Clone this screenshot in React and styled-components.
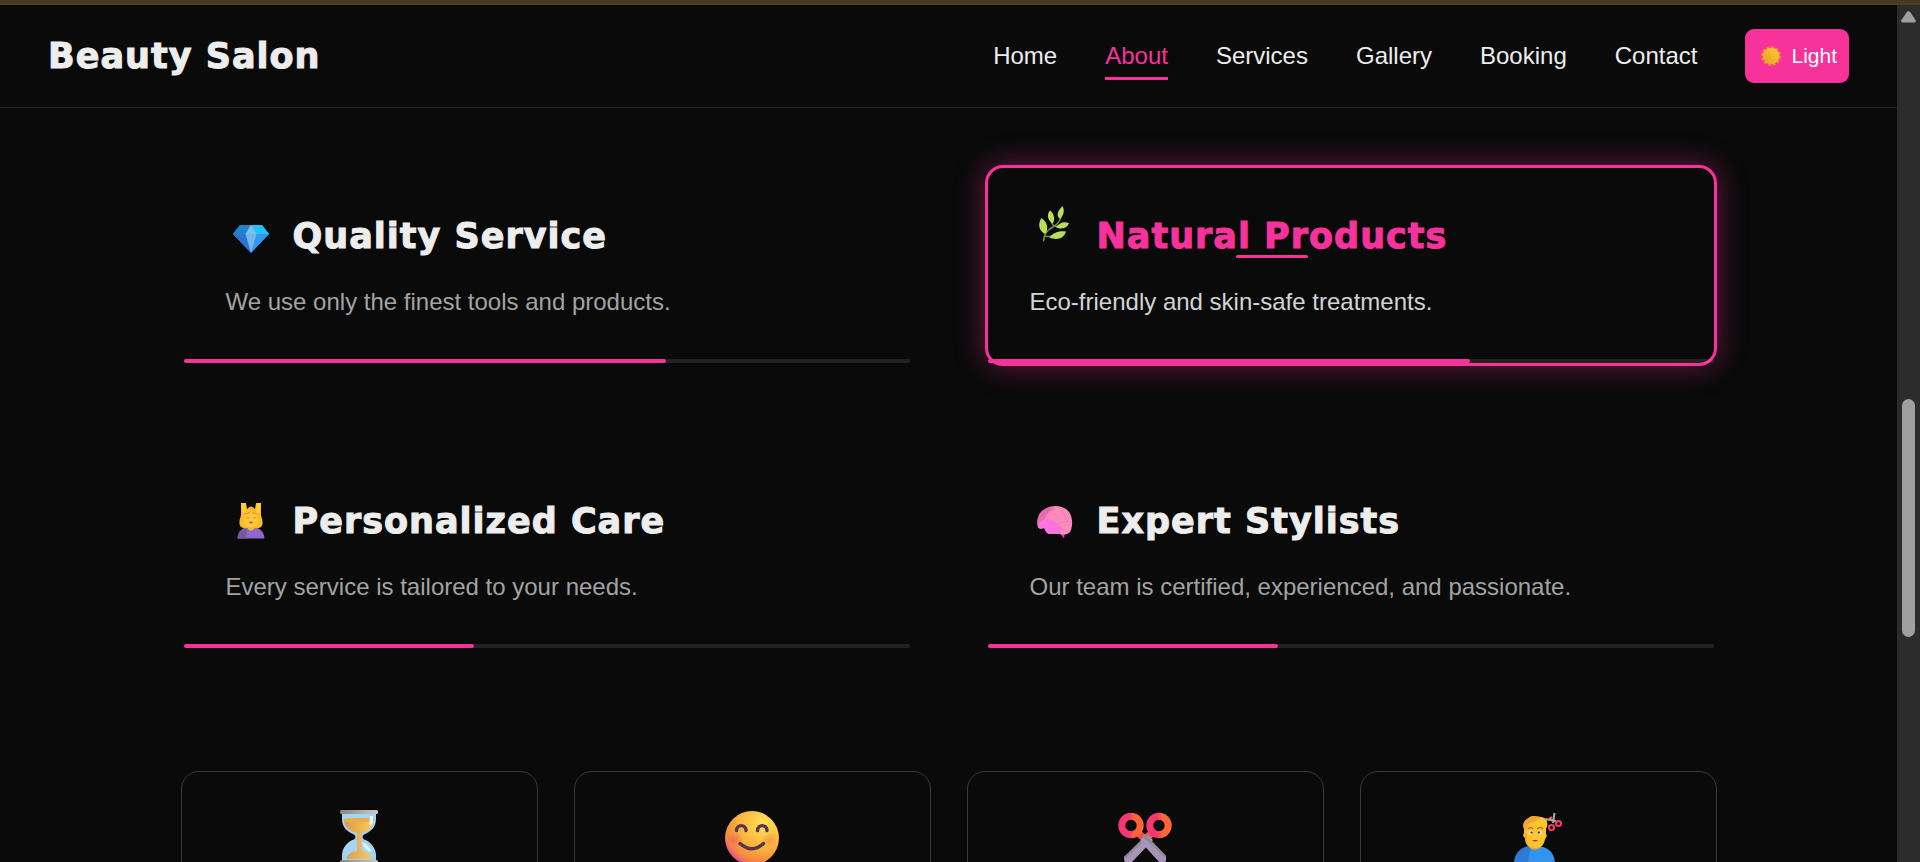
import { useState } from "react";
import styled, { createGlobalStyle } from "styled-components";

const pink = "#f8329b";
const displayFont = "'DejaVu Sans', 'Liberation Sans', sans-serif";

const GlobalStyle = createGlobalStyle`
    * {
        box-sizing: border-box;
    }
    body {
        margin: 0;
        background-color: #0a0a0a;
        color: #ededed;
        font-family: 'Liberation Sans', Arial, sans-serif;
        overflow: hidden;
    }
    h1, h2, p {
        margin: 0;
    }
`
const Screen = styled.div`
    height: 100vh;
    display: flex;
    flex-direction: column;
    overflow: hidden;
`
const TopStrip = styled.div`
    height: 5px;
    flex-shrink: 0;
    background-color: #4a3820;
    border-bottom: 2px solid #503d28;
`
const Body = styled.div`
    display: flex;
    flex: 1;
    min-height: 0;
`
const Page = styled.div`
    flex: 1;
    min-width: 0;
    overflow: hidden;
`
const HeaderBar = styled.header`
    display: flex;
    align-items: center;
    justify-content: space-between;
    padding: 24px 48px;
    border-bottom: 1px solid #1f292e;
`
const Brand = styled.h1`
    font-family: ${displayFont};
    font-size: 35px;
    line-height: 54px;
    font-weight: 900;
    letter-spacing: 1px;
    -webkit-text-stroke: 1px currentColor;
`
const Nav = styled.nav`
    display: flex;
    align-items: center;
    gap: 48px;
`
const NavLink = styled.a`
    font-size: 24px;
    line-height: 36px;
    padding: 3px 0;
    color: ${({ $active }) => ($active ? pink : "#ededed")};
    border-bottom: 3px solid ${({ $active }) => ($active ? pink : "transparent")};
    border-top: 3px solid transparent;
    text-decoration: none;
`
const ThemeButton = styled.button`
    display: flex;
    align-items: center;
    gap: 10px;
    height: 54px;
    padding: 0 12px 0 16px;
    border: 0;
    border-radius: 9px;
    background-color: ${pink};
    color: white;
    font-family: inherit;
    font-size: 21px;
    cursor: pointer;
`
const Main = styled.main`
    max-width: 1536px;
    margin: 0 auto;
    padding-top: 57px;
`
const FeatureGrid = styled.section`
    display: grid;
    grid-template-columns: 1fr 1fr;
    gap: 84px 72px;
`
const FeatureCard = styled.article`
    position: relative;
    padding: 41px 42px;
    border: 3px solid ${({ $active }) => ($active ? pink : "transparent")};
    border-radius: 18px;
    box-shadow: ${({ $active }) => ($active ? "0 0 30px rgba(248, 50, 155, 0.4)" : "none")};
`
const FeatureHead = styled.div`
    display: flex;
    align-items: center;
    gap: 24px;
    padding-left: 7px;
    margin-bottom: 18px;
`
const FeatureIcon = styled.span`
    display: flex;
    transform: ${({ $active }) => ($active ? "translateY(-12px)" : "none")};
`
const FeatureTitle = styled.h2`
    position: relative;
    font-family: ${displayFont};
    font-size: 35px;
    line-height: 54px;
    font-weight: 900;
    letter-spacing: 1px;
    -webkit-text-stroke: 1px currentColor;
    color: ${({ $active }) => ($active ? pink : "#ededed")};
    &::after {
        content: '';
        display: ${({ $active }) => ($active ? "block" : "none")};
        position: absolute;
        left: calc(50% - 36px);
        bottom: 5px;
        width: 72px;
        height: 3px;
        border-radius: 2px;
        background-color: ${pink};
    }
`
const FeatureText = styled.p`
    font-size: 24px;
    line-height: 41px;
    color: ${({ $active }) => ($active ? "#d4d4d4" : "#a3a3a3")};
`
const Track = styled.div`
    position: absolute;
    left: 0;
    right: 0;
    bottom: 0;
    height: 4px;
    border-radius: 2px;
    background-color: rgba(255, 255, 255, 0.1);
`
const Fill = styled.div`
    height: 100%;
    border-radius: 2px;
    background-color: ${pink};
`
const StatGrid = styled.section`
    display: grid;
    grid-template-columns: repeat(4, 1fr);
    gap: 36px;
    margin-top: 120px;
`
const StatCard = styled.article`
    display: flex;
    justify-content: center;
    padding: 38px 24px 96px;
    border: 1px solid #3a3a3a;
    border-radius: 18px;
`
const ScrollRail = styled.div`
    width: 23px;
    flex-shrink: 0;
    display: flex;
    flex-direction: column;
    align-items: center;
    padding-top: 6px;
    background-color: #2c2c2c;
`
const ScrollThumb = styled.div`
    width: 13px;
    height: 28%;
    margin-top: 376px;
    border-radius: 7px;
    background-color: #9f9f9f;
`

const Sun = () => (
    <svg width="20" height="20" viewBox="0 0 36 36" aria-hidden="true">
        <defs>
            <linearGradient id="sun" x1="1" y1="0" x2="0" y2="1">
                <stop offset="0" stopColor="#ffcf2e" />
                <stop offset="1" stopColor="#e89a2c" />
            </linearGradient>
        </defs>
        <circle cx="18" cy="18" r="15.5" fill="none" stroke="#f08a3c" strokeWidth="5" strokeDasharray="5 3.1" />
        <circle cx="18" cy="18" r="15" fill="url(#sun)" />
        <path d="M10 12Q14 24 26 26" fill="none" stroke="#e9a52b" strokeWidth="1" />
    </svg>
)

const Gem = () => (
    <svg width="36" height="36" viewBox="0 0 36 36" aria-hidden="true">
        <path d="M7 7H29L36 16L18 35L0 16Z" fill="#2f86e0" />
        <path d="M7 7H18L12.5 16H0Z" fill="#1f84cf" />
        <path d="M18 7H29L36 16H23.5Z" fill="#22c3fa" />
        <path d="M23.5 16H36L18 35Z" fill="#3397f0" />
        <path d="M0 16H12.5L18 35Z" fill="#2c74d4" />
        <path d="M18 7L23.5 16L18 35L12.5 16Z" fill="#74b8ea" />
        <path d="M18 7L23.5 16H12.5Z" fill="#7cc0ea" />
    </svg>
)

const Herb = () => (
    <svg width="36" height="36" viewBox="0 0 36 36" aria-hidden="true">
        <path d="M6.5 35.5C7 27 11 23.5 17.5 20C22 17 24 12 24.5 8M8 30C14 32 18 29 20 28M17 20C14 17 13.5 14 13.5 11M18 20C22 21 25 20 28 18M10 27C7 24 6 21 6 18" fill="none" stroke="#71903f" strokeWidth="1.5" />
        <g fill="#b8dd5b">
            <path d="M25.5 0C19.5 6 19.5 10 23 13C26.5 9 28 5 25.5 0Z" />
            <path d="M13 4.5C9 9 11 15 16 17.5C18.5 12 16.5 7 13 4.5Z" />
            <path d="M4.5 12C0 19 2.5 25 8 28C12 23 10.5 16 4.5 12Z" />
            <path d="M32 17C26 15 22 17 19 21.5C24 23.5 30 22.5 32 17Z" />
            <path d="M29 25.5C21 24.5 16 27 12.5 31.5C19 34.5 27 33 29 25.5Z" />
        </g>
    </svg>
)

const Massage = () => (
    <svg width="36" height="36" viewBox="0 0 36 36" aria-hidden="true">
        <path d="M4.5 35.5C5 28 10 24 18 24C26 24 31 28 31.5 35.5Z" fill="#8b68c9" />
        <path d="M4.5 35.5C5 29 8 25 14 24.5L13 35.5Z" fill="#76589f" />
        <path d="M8 0H13L14 6Q18 1 22 6L23 0H28V12C29 16 31 21 28 24C25 26 22 25 18 25C14 25 11 26 8 24C5 21 7 16 8 12Z" fill="#fbb92d" />
        <path d="M8 0H12L13 8L10 11ZM24 0H28L26 11L23 8Z" fill="#ffcf35" />
        <path d="M12 10Q18 7 24 10L25 17C25 22 22 25 18 25C14 25 11 22 11 17Z" fill="#ffc93d" />
        <path d="M13.5 14.5Q15 16 16.5 14.5M20 14.500Q21.500 16 23 14.500M12 11L17 9.500M24 11L19 9.500" fill="none" stroke="#d98a2b" />
        <path d="M16 19Q18 18 20 19Q18 22 16 19" fill="#dc325c" />
        <path d="M15 24H21V26Q18 29 15 26Z" fill="#f8b82d" />
    </svg>
)

const Brain = () => (
    <svg width="36" height="36" viewBox="0 0 36 36" aria-hidden="true">
        <path d="M22 29L27 35.5L28 28Z" fill="#e936bd" />
        <path d="M1 24C-1 17 2 9 8 6C15 1 27 2 32 9C36 14 36 24 33 29C29 33 24 31 21 31H13C9 31 8 26 7 25C4 26 2 26 1 24Z" fill="#fc8bbd" />
        <path d="M1 24C-1 17 2 9 8 6C12 4 15 4 18 5C9 10 7 16 5 25C3 26 2 25 1 24Z" fill="#e76bae" />
        <path d="M7 16C12 14 18 18 22 22C27 25 24 31 20 31H13C9 31 8 26 7 25C4 26 2 26 1 24C0 18 5 18 7 16Z" fill="#fb74dd" />
        <path d="M12 8C15 13 21 10 21 15M25 6C24 11 31 11 28 17M21 21C25 18 30 20 34 18M28 26C25 28 24 23 20 24" fill="none" stroke="#f07cb4" />
    </svg>
)

const Hourglass = () => (
    <svg width="54" height="54" viewBox="0 0 54 54" aria-hidden="true">
        <defs>
            <linearGradient id="sand" x1="0" x2="1">
                <stop offset="0" stopColor="#d79a4e" />
                <stop offset="1" stopColor="#ffcc59" />
            </linearGradient>
            <linearGradient id="rim" x1="0" x2="1">
                <stop offset="0" stopColor="#858585" />
                <stop offset="1" stopColor="#c9c9c9" />
            </linearGradient>
        </defs>
        <path d="M10 3H44V9C44 18 38 22 32 24.5Q29 27 32 29.5C38 31 44 38 44 45V51H10V45C10 38 16 31 22 29.5Q25 27 22 24.5C16 22 10 18 10 9Z" fill="#a5d3f4" />
        <path d="M12 9Q27 7 42 9C42 18 36 21 29.5 23V41Q38 42 40 49H14Q16 42 25 41V23C18 21 12 18 12 9Z" fill="url(#sand)" />
        <path d="M12 9Q27 7 42 9L40 12H14Z" fill="#e9ad43" />
        <path d="M38 6H41V13Q39 16 37 15ZM30 32Q38 35 39 42Q32 40 30 32Z" fill="#e2f3fb" />
        <rect x="8" width="38" height="4" rx="1.5" fill="url(#rim)" />
        <rect x="8" y="50" width="38" height="4" rx="1.5" fill="url(#rim)" />
    </svg>
)

const Smile = () => (
    <svg width="54" height="54" viewBox="0 0 54 54" aria-hidden="true">
        <defs>
            <radialGradient id="face" cx="0.72" cy="0.22" r="0.85">
                <stop offset="0" stopColor="#ffdf58" />
                <stop offset="0.55" stopColor="#fcb43b" />
                <stop offset="0.88" stopColor="#f28443" />
                <stop offset="1" stopColor="#e84b97" />
            </radialGradient>
            <radialGradient id="cheek">
                <stop offset="0" stopColor="#f17455" />
                <stop offset="1" stopColor="#f17455" stopOpacity="0" />
            </radialGradient>
        </defs>
        <circle cx="27" cy="28" r="27" fill="url(#face)" />
        <circle cx="9" cy="30" r="9" fill="url(#cheek)" />
        <circle cx="45" cy="30" r="8" fill="url(#cheek)" opacity="0.5" />
        <path d="M11.5 20.5C12 14 20.5 14 21 20.5M32.5 20.5C33 14 41.5 14 42 20.5M15 33.5Q27 44 38.5 33.5" fill="none" stroke="#53364f" strokeWidth="3.4" strokeLinecap="round" />
    </svg>
)

const Scissors = () => (
    <svg width="54" height="54" viewBox="0 0 54 54" aria-hidden="true">
        <defs>
            <linearGradient id="grip" x1="0" x2="1">
                <stop offset="0.4" stopColor="#f73770" />
                <stop offset="0.65" stopColor="#ff6538" />
            </linearGradient>
        </defs>
        <path d="M20 23L27 29M34 23L27 29" stroke="#fb4b52" strokeWidth="7" />
        <circle cx="13" cy="15.5" r="9.2" fill="none" stroke="url(#grip)" strokeWidth="7" />
        <circle cx="41" cy="15.5" r="9.2" fill="none" stroke="url(#grip)" strokeWidth="7" />
        <path d="M30 25L35 30L14 52Q6 58 6 47Z" fill="#aa95b9" />
        <path d="M27 24L48 46Q49 56 42 53L22 31Z" fill="#a692bb" />
        <path d="M27 24L48 46L46 47L25 27ZM22 31L6 47L8 48L24 33Z" fill="#8f8c91" />
    </svg>
)

const Haircut = () => (
    <svg width="54" height="54" viewBox="3 -1 54 54" aria-hidden="true">
        <path d="M6 54C6 42 13 35 27 35C41 35 47 42 47 54Z" fill="#3195ef" />
        <path d="M6 54C6 42 13 35 23 35L19 54Z" fill="#2c7bd6" />
        <path d="M21 33H33V36Q27 42 21 36Z" fill="#ee9f27" />
        <path d="M16 18C13 10 20 8 22 6C26 4 29 6 33 6C39 7 41 12 38 18V23Q40 25 37 28C36 35 32 37 27 37C21 37 17 34 17 27Q14 25 16 22Z" fill="#ffc52f" />
        <path d="M16 18C13 10 20 8 22 6C26 4 29 6 33 6L28 10L20 13L18 21ZM17 22H19V30L21 34Q17 31 17 27Z" fill="#f5a52b" />
        <path d="M20 18Q23 15 25 18M29 18Q32 15 35 18" fill="none" stroke="#d7662b" strokeWidth="1.5" />
        <circle cx="23" cy="21.5" r="2" fill="white" />
        <circle cx="31.5" cy="21.5" r="2" fill="white" />
        <circle cx="23.5" cy="21.5" r="1.2" fill="#414044" />
        <circle cx="31" cy="21.5" r="1.2" fill="#414044" />
        <path d="M24 29H30Q27 32 24 29" fill="#c42c4c" />
        <path d="M37 8L48 10M46.5 2L45 12" stroke="#aaa6b5" strokeWidth="2" />
        <path d="M40 9L44 6" stroke="#ff7138" strokeWidth="2" />
        <circle cx="43.5" cy="16.5" r="2.6" fill="none" stroke="#f74056" strokeWidth="2" />
        <circle cx="50.5" cy="12.5" r="2.6" fill="none" stroke="#f73770" strokeWidth="2" />
    </svg>
)

const links = ["Home", "About", "Services", "Gallery", "Booking", "Contact"];

const features = [
    { title: "Quality Service", text: "We use only the finest tools and products.", icon: <Gem />, progress: 66.4 },
    { title: "Natural Products", text: "Eco-friendly and skin-safe treatments.", icon: <Herb />, progress: 66.4 },
    { title: "Personalized Care", text: "Every service is tailored to your needs.", icon: <Massage />, progress: 40 },
    { title: "Expert Stylists", text: "Our team is certified, experienced, and passionate.", icon: <Brain />, progress: 40 },
];

export default function App() {
    const [page, setPage] = useState("About")
    const [active, setActive] = useState("Natural Products")

    return (
        <Screen>
            <GlobalStyle />
            <TopStrip />
            <Body>
                <Page>
                    <HeaderBar>
                        <Brand>Beauty Salon</Brand>
                        <Nav>
                            {links.map((name) => (
                                <NavLink key={name} href={"#" + name.toLowerCase()} $active={name === page} onClick={() => setPage(name)}>{name}</NavLink>
                            ))}
                            <ThemeButton type="button"><Sun />Light</ThemeButton>
                        </Nav>
                    </HeaderBar>
                    <Main>
                        <FeatureGrid>
                            {features.map((f) => (
                                <FeatureCard key={f.title} $active={f.title === active} onMouseEnter={() => setActive(f.title)}>
                                    <FeatureHead>
                                        <FeatureIcon $active={f.title === active}>{f.icon}</FeatureIcon>
                                        <FeatureTitle $active={f.title === active}>{f.title}</FeatureTitle>
                                    </FeatureHead>
                                    <FeatureText $active={f.title === active}>{f.text}</FeatureText>
                                    <Track><Fill style={{ width: f.progress + "%" }} /></Track>
                                </FeatureCard>
                            ))}
                        </FeatureGrid>
                        <StatGrid>
                            <StatCard><Hourglass /></StatCard>
                            <StatCard><Smile /></StatCard>
                            <StatCard><Scissors /></StatCard>
                            <StatCard><Haircut /></StatCard>
                        </StatGrid>
                    </Main>
                </Page>
                <ScrollRail>
                    <svg width="15" height="12" viewBox="0 0 15 12" aria-hidden="true">
                        <path d="M5.5 1.5Q7.5 -1 9.5 1.5L14.5 9Q15.5 11.5 13 11.5H2Q-0.5 11.5 0.5 9Z" fill="#9f9f9f" />
                    </svg>
                    <ScrollThumb />
                </ScrollRail>
            </Body>
        </Screen>
    )
}
